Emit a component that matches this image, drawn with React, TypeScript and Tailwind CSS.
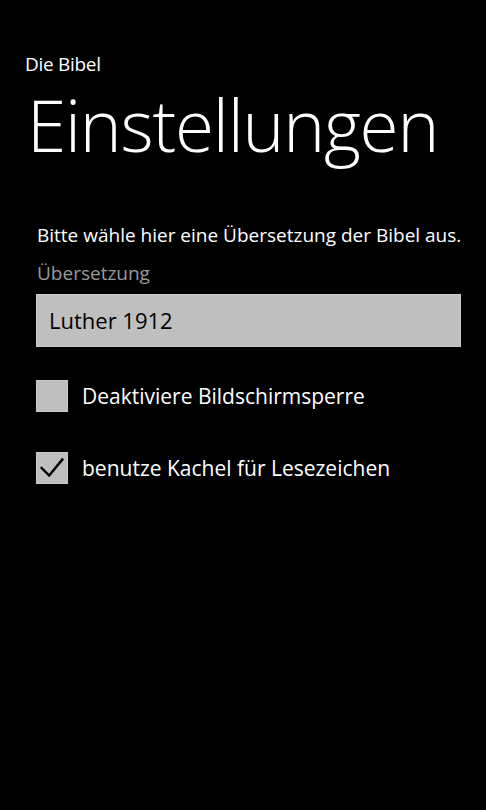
export default function App() {
  return (
    <div className="min-h-[810px] w-full bg-black text-white font-['Open_Sans','Noto_Sans',sans-serif]">
      <div className="pt-[52px] pl-[25px] text-[19px] leading-[24px] tracking-[-0.3px]">Die Bibel</div>
      <div className="pl-[27px] mt-[7px] text-[71px] leading-[84px] font-light tracking-[-1.2px]">Einstellungen</div>

      <div className="px-[36px] mt-[56px]">
        <div className="text-[19px] leading-[24px] pl-px whitespace-nowrap">Bitte wähle hier eine Übersetzung der Bibel aus.</div>
        <div className="mt-[14px] text-[19px] leading-[24px] pl-px text-[#9a9a9a]">Übersetzung</div>
        <div className="mt-[9px] h-[53px] w-[425px] bg-[#bfbfbf] border border-[#cacaca] flex items-center pl-[12px] text-black text-[22px]">
          Luther 1912
        </div>

        <div className="mt-[33px] flex items-center gap-[14px]">
          <div className="w-[32px] h-[32px] bg-[#bfbfbf] border border-[#cacaca]" />
          <span className="text-[21px] leading-[32px] whitespace-nowrap">Deaktiviere Bildschirmsperre</span>
        </div>

        <div className="mt-[40px] flex items-center gap-[14px]">
          <div className="w-[32px] h-[32px] bg-[#bfbfbf] border border-[#cacaca] flex items-center justify-center">
            <svg width="32" height="32" viewBox="0 0 32 32" fill="none">
              <path d="M5 16 L13 24 L27 7" stroke="#000" strokeWidth="2.6" strokeLinecap="square" />
            </svg>
          </div>
          <span className="text-[21px] leading-[32px] whitespace-nowrap">benutze Kachel für Lesezeichen</span>
        </div>
      </div>
    </div>
  )
}
